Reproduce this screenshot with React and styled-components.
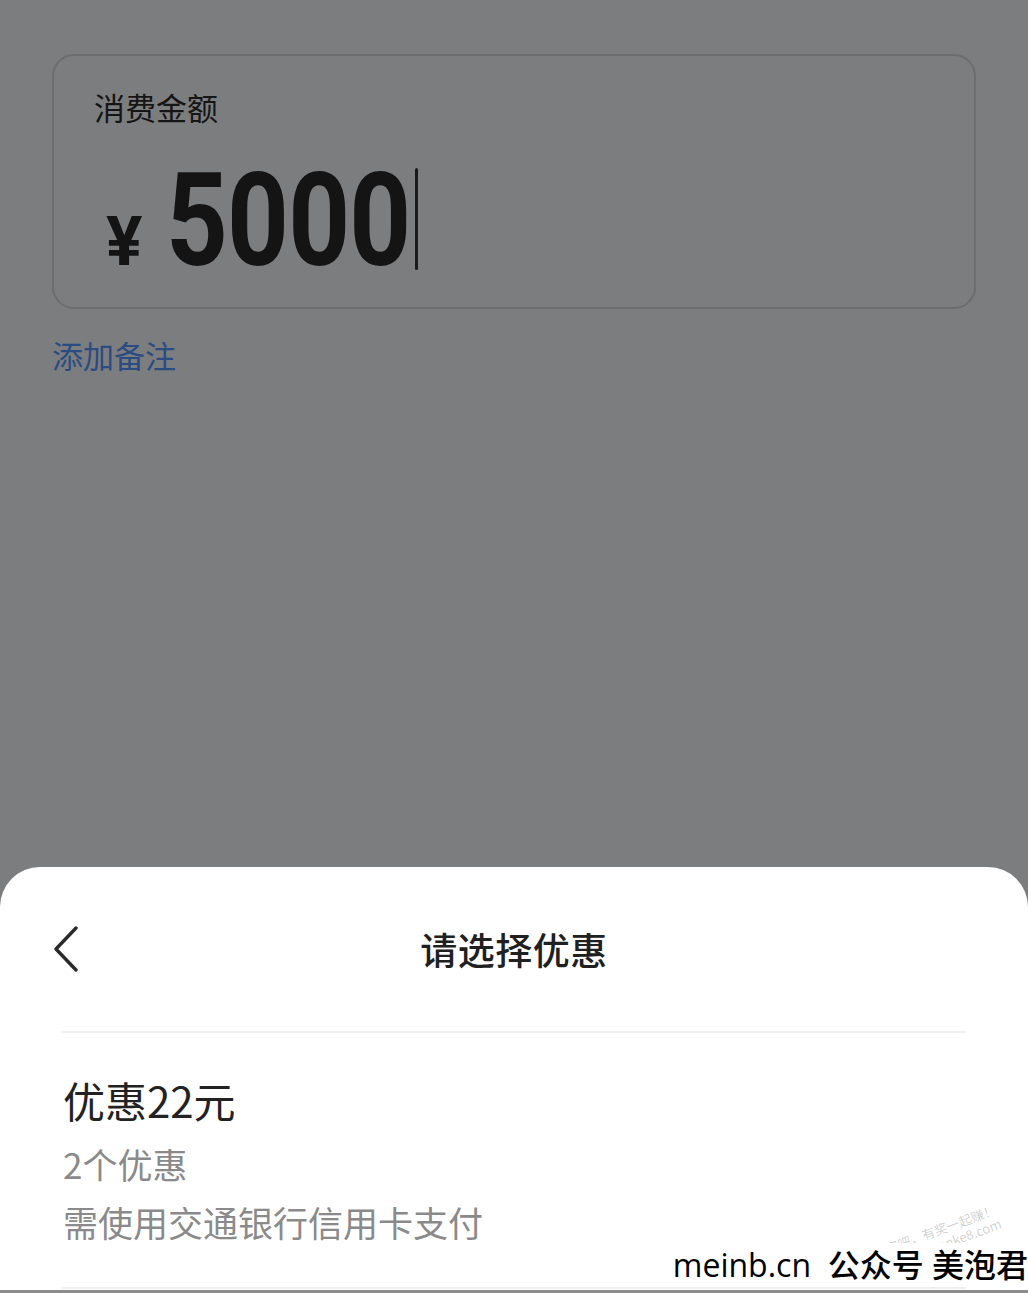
import React from "react";
import styled, { createGlobalStyle } from "styled-components";

const GlobalStyle = createGlobalStyle`
    html, body {
        margin: 0;
        padding: 0;
        background: #7c7d7f;
    }
    body {
        font-family: "Noto Sans CJK SC", "Noto Sans", sans-serif;
    }
`;

const Page = styled.div`
    position: relative;
    display: flex;
    flex-direction: column;
    width: 1028px;
    height: 1293px;
    overflow: hidden;
    background: #7c7d7f;
`;

const Backdrop = styled.div`
    flex: 1;
    padding: 54px 52px 0;
`;

const AmountCard = styled.div`
    box-sizing: border-box;
    height: 255px;
    border: 2px solid #6c6d6f;
    border-radius: 22px;
    padding: 29px 40px 0;
`;

const Label = styled.div`
    font-size: 31px;
    line-height: 43px;
    color: #151515;
`;

const AmountRow = styled.div`
    display: flex;
    align-items: baseline;
    margin-top: 28px;
    padding-left: 12px;
    font-family: Roboto, "Liberation Sans", sans-serif;
    font-weight: 700;
    line-height: 1;
    color: #141414;
`;

const Currency = styled.span`
    font-size: 68px;
    margin-right: 24px;
`;

const Digits = styled.span`
    display: inline-block;
    font-size: 130px;
    letter-spacing: -1px;
    transform: scaleX(0.83);
    transform-origin: left center;
    margin-right: -50px;
`;

const Caret = styled.span`
    display: inline-block;
    width: 3px;
    height: 102px;
    margin-left: 4px;
    border-radius: 2px;
    background: #1a1a1a;
    transform: translateY(5px);
`;

const NoteLink = styled.div`
    margin-top: 24px;
    font-size: 31px;
    line-height: 43px;
    color: #2b4c82;
`;

const Sheet = styled.div`
    flex: none;
    box-sizing: border-box;
    height: 426px;
    background: #fff;
    border-radius: 40px 40px 0 0;
    border-bottom: 3px solid #8c8c8c;
`;

const SheetHeader = styled.div`
    display: grid;
    grid-template-columns: 1fr auto 1fr;
    align-items: center;
    height: 164px;
`;

const BackButton = styled.div`
    padding-left: 52px;
    display: flex;
    align-items: center;
`;

const Title = styled.div`
    font-size: 37px;
    font-weight: 500;
    color: #202020;
    letter-spacing: 0.5px;
`;

const Divider = styled.div`
    height: 2px;
    margin: 0 62px;
    background: #eeeeee;
`;

const Offer = styled.div`
    padding: 39px 63px 36px;
`;

const OfferTitle = styled.div`
    font-size: 42px;
    line-height: 56px;
    color: #222;
`;

const OfferLine = styled.div`
    font-size: 35px;
    line-height: 58px;
    color: #8a8a8a;
    margin-top: ${p => (p.first ? "7px" : "0")};
`;

const Watermark = styled.div`
    position: absolute;
    right: 0;
    bottom: 6px;
    font-family: "Open Sans", "Noto Sans CJK SC", sans-serif;
    font-size: 32px;
    font-weight: 500;
    line-height: 44px;
    color: #000;
    white-space: pre;
    background: #fff;
    padding-left: 4px;
`;

const Stamp = styled.div`
    position: absolute;
    right: 26px;
    bottom: 40px;
    transform: rotate(-20deg);
    font-size: 13px;
    line-height: 15px;
    color: rgba(0, 0, 0, 0.2);
    text-align: right;
`;

const ChevronLeft = () => (
    <svg width="28" height="46" viewBox="0 0 28 46">
        <path
            d="M24 2 L4 23 L24 44"
            fill="none"
            stroke="#2a2a2a"
            strokeWidth="3.4"
            strokeLinecap="round"
            strokeLinejoin="round"
        />
    </svg>
);

const App = () => {
    return (
        <Page>
            <GlobalStyle />
            <Backdrop>
                <AmountCard>
                    <Label>消费金额</Label>
                    <AmountRow>
                        <Currency>¥</Currency>
                        <Digits>5000</Digits>
                        <Caret />
                    </AmountRow>
                </AmountCard>
                <NoteLink>添加备注</NoteLink>
            </Backdrop>
            <Sheet>
                <SheetHeader>
                    <BackButton>
                        <ChevronLeft />
                    </BackButton>
                    <Title>请选择优惠</Title>
                    <div />
                </SheetHeader>
                <Divider />
                <Offer>
                    <OfferTitle>优惠22元</OfferTitle>
                    <OfferLine first>2个优惠</OfferLine>
                    <OfferLine>需使用交通银行信用卡支付</OfferLine>
                </Offer>
                <Divider />
            </Sheet>
            <Stamp>
                赚客吧，有奖一起赚！
                <br />
                www.zuanke8.com
            </Stamp>
            <Watermark>{"meinb.cn  公众号 美泡君"}</Watermark>
        </Page>
    );
};

export default App;
